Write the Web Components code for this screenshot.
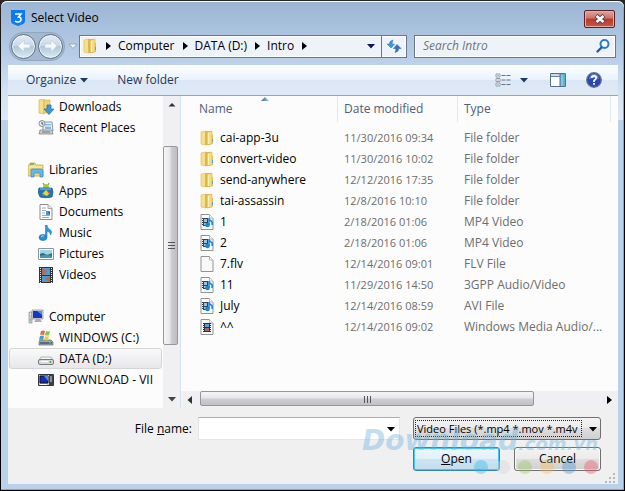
<!DOCTYPE html>
<html lang="en">
<head>
<meta charset="utf-8">
<title>Select Video</title>
<style>
  html, body { margin: 0; }
  body {
    min-height: 100vh; display: flex; background: linear-gradient(#2b2523, #000 90px);
    font: 12px/16px "Open Sans", "Noto Sans", sans-serif; color: #000;
  }
</style>
</head>
<body>
<select-video-dialog></select-video-dialog>
<script>
const ICONS = {
  app: `<path d="M1 0h14v11q0 2-2 3l-5 2-5-2q-2-1-2-3z" fill="#0a7bf0"/><path d="M5 4h6L8.500 7Q11 7 11 9.500T8 12q-2 0-3-1" fill="none" stroke="#fff" stroke-width="1.500"/>`,
  folder: `<path d="M2 2l5-1v14l-5-1z" fill="#f6df8b" stroke="#dcb95a" stroke-width=".6"/><path d="M6 1h5v14H6z" fill="#dfb850"/><path d="M8 2l5-1v13l-5 1z" fill="#f5dc82" stroke="#d2aa45" stroke-width=".6"/><path d="M9.500 3v11" stroke="#fff2b5"/><path d="M13 5h1v9h-1z" fill="#e4bd55"/><path d="M13 9h1v3h-1z" fill="#4aa7e8"/>`,
  downloads: `<path d="M1 1l5-1v15l-5-1z" fill="#f6df8b" stroke="#d5ae49" stroke-width=".6"/><path d="M6 1h6v13H6z" fill="#f1d375" stroke="#d5ae49" stroke-width=".6"/><path d="M9 6h4v4h3l-5 5.500L6 10h3z" fill="#3a97e0" stroke="#1d6cb8" stroke-width=".7"/>`,
  recent: `<path d="M5 2h9l1 9H5z" fill="#e8f3fb" stroke="#8794a1"/><path d="M7 4h6v5H7z" fill="#7fb9e2"/><path d="M7 6h6" stroke="#fff"/><path d="M2 10h12l1 4H1z" fill="#c9ccd0" stroke="#85888c" stroke-width=".8"/><path d="M4 12h8" stroke="#777"/><circle cx="4" cy="3.500" r="3" fill="#e4ebef" stroke="#84919b"/><path d="M4 2v2h1.500" fill="none" stroke="#456"/>`,
  libraries: `<path d="M0 3h2V1h5l1 2h7v11H0z" fill="#f2d980" stroke="#c8a553" stroke-width=".8"/><path d="M2 2h4" stroke="#56b947" stroke-width="1.500"/><path d="M1 5h13" stroke="#fff2b8"/><path d="M3 15V8q0-1 1-1h9q2 0 2 2v6h-3v-3q0-1-1-1H7q-1 0-1 1v3z" fill="#66b8e8" stroke="#3486bd" stroke-width=".7"/>`,
  apps: `<path d="M5 5q0-4 3-4t3 4z" fill="#9ccc38"/><path d="M5 0l1 2M11 0l-1 2" stroke="#65921b"/><path d="M1 5h13l1 4-1 5q-6 1.500-12 0L0 9z" fill="#2674b5" stroke="#16538b" stroke-width=".7"/><path d="M2 6h11" stroke="#7ec2ee"/><path d="M4 11l4-4 4 3-3 3z" fill="#e6d638"/><path d="M5 10l2 2-2 1z" fill="#69b436"/><path d="M9 8l3 1-1 2z" fill="#e24736"/>`,
  documents: `<path d="M2 .5h8l4 4v11H2z" fill="#fff" stroke="#8c8c8c"/><path d="M10 .5v4h4" fill="#e4e4e4" stroke="#aaa"/><path d="M4 4h4M4 6.500h4M4 9h3M4 11.500h8M4 13.500h7" stroke="#9caab8"/><path d="M8 7h4v4H8z" fill="#4f95d5"/><path d="M10 8h2v2z" fill="#1c559c"/>`,
  music: `<ellipse cx="5" cy="12.500" rx="4" ry="3" fill="#278ed8" stroke="#1a6eb3" stroke-width=".6"/><path d="M7.500 12V0h1.500q0 3 3.500 5 2 1.500 0 5 0-3-3.500-4v6z" fill="#2f95dd" stroke="#1f7cc4" stroke-width=".6"/><path d="M3 12q1-1.500 3-1" stroke="#a8dcfb" fill="none"/>`,
  pictures: `<path d="M.5 2.500h15v11H.5z" fill="#fff" stroke="#8d949a"/><path d="M2 4h12v8H2z" fill="#9bd5ef"/><path d="M2 8q3-2 5 0t7-1v5H2z" fill="#32746d"/><path d="M2 10q6-2 12 0v2H2z" fill="#439ba8"/>`,
  videos: `<path d="M1 0h14v16H1z" fill="#303437"/><path d="M4 1h8v7H4zM4 9h8v6H4z" fill="#4f9bd0"/><path d="M4 1l5 3-3 4H4zM12 9l-5 2 3 4h2z" fill="#bc6a53"/><path d="M2.500 1v15M13.500 1v15" stroke="#e4e9ec" stroke-dasharray="1 1"/>`,
  computer: `<path d="M1 3h3v11H1z" fill="#c9ced3" stroke="#8c9196" stroke-width=".7"/><path d="M2 5h1" stroke="#fff"/><path d="M2 11h1" stroke="#45a842"/><path d="M4 1h11v9H4z" fill="#d7dce1" stroke="#858a90" stroke-width=".7"/><path d="M5 2h9v7H5z" fill="#1637c0"/><path d="M9 2h5v4z" fill="#5a8bf0"/><path d="M8 10h4l2 3H6z" fill="#a8adb2"/>`,
  windrive: `<path d="M2 10h11l2 2v3H1v-3z" fill="#9da7ae" stroke="#636c73" stroke-width=".7"/><path d="M2 12h12v2H2z" fill="#4d7188"/><path d="M11 13h2" stroke="#60df65"/><path d="M3 1q2-1 4 0L6 5Q4 4 2 5z" fill="#ed6939"/><path d="M8 1q2 1 4 0l-1 4q-2 1-4 0z" fill="#8cc444"/><path d="M2 6q2-1 4 0L5 10q-2-1-4 0z" fill="#3f9bda"/><path d="M7 6q2 1 4 0l-1 4q-2 1-4 0z" fill="#f6c63b"/>`,
  drive: `<path d="M3 6h10l2 3H1z" fill="#f1f3f4" stroke="#a4a7a9" stroke-width=".8"/><rect x=".5" y="8.500" width="15" height="5" rx="1.500" fill="#d7dadc" stroke="#777b7e"/><path d="M3 10.500h7" stroke="#fff"/><path d="M12.500 10v2" stroke="#3dac35" stroke-width="1.500"/>`,
  device: `<path d="M.5 2.500h15v11H.5z" fill="#c7cacd" stroke="#36393c"/><path d="M2 4h8v7H2z" fill="#112fb8" stroke="#111"/><path d="M6 4h4v5z" fill="#5a86ea"/><path d="M11 3h4v10h-4z" fill="#3b4145"/><path d="M12 5h2M12 7h2M12 9h2" stroke="#d8e4e9"/><path d="M2 12.500h7" stroke="#fff"/>`,
  blank: `<path d="M2 .5h8.500l3.500 3.500v11.500H2z" fill="#f9f9f9" stroke="#929292"/><path d="M10.500 .5V4H14" fill="#fff" stroke="#b5b5b5"/>`,
  media: `<path d="M2 .5h8.500l3.500 3.500v11.500H2z" fill="#fcfcfc" stroke="#929292"/><path d="M10.500 .5V4H14" fill="#fff" stroke="#b5b5b5"/><path d="M3 4h6v8H3z" fill="#35434e"/><path d="M5 5h3v3H5zM5 9h3v2H5z" fill="#9bc4de"/><path d="M3.500 5v7" stroke="#fff" stroke-dasharray="1 1"/><circle cx="8.500" cy="11" r="2.300" fill="#1686dc"/><path d="M10 11V4q0 2 2 3t1 4" fill="none" stroke="#1686dc" stroke-width="1.600"/>`,
  film: `<path d="M2 .5h8.500l3.500 3.500v11.500H2z" fill="#fcfcfc" stroke="#929292"/><path d="M10.500 .5V4H14" fill="#fff" stroke="#b5b5b5"/><path d="M4 4h8v9H4z" fill="#263541"/><path d="M6 5h4v3H6z" fill="#4ea2d5"/><path d="M6 9h4v3H6z" fill="#a2666b"/><path d="M4.500 5v8M11.500 5v8" stroke="#fff" stroke-dasharray="1 1"/>`,
  right: `<path d="M6 4l5 4-5 4z" fill="#000"/>`,
  left: `<path d="M10 4L5.500 8l4.500 4z" fill="#333"/>`,
  up: `<path d="M4.500 9.500L8 6l3.500 3.500z" fill="#333"/>`,
  down: `<path d="M4 6h8L8 10.500z" fill="currentColor"/>`,
  downlight: `<path d="M4 6h8L8 10.500z" fill="#eef5fc" stroke="#8d9cb0" stroke-width=".8"/>`,
  refresh: `<path d="M7 2q-4 1-3.500 4H1l4 4 3.500-4H6q0-2 1-4z" fill="#3b9ade" stroke="#2670b4" stroke-width=".5"/><path d="M9 14.500q4-1 3.500-4H15l-4-4-3.500 4H10q0 2-1 4z" fill="#3674bd" stroke="#205794" stroke-width=".5"/>`,
  search: `<circle cx="9.500" cy="6" r="4" fill="#f3f9ff" stroke="#2d79c9" stroke-width="2"/><path d="M6.500 9.500L2.500 13.500" stroke="#2559a8" stroke-width="2.400" stroke-linecap="round"/>`,
  views: `<path d="M1 2h4v3H1zM1 6.500h4v3H1zM1 11h4v3H1z" fill="#fff" stroke="#7c8ca0" stroke-width=".8"/><path d="M2.500 3.500h1" stroke="#38a"/><path d="M2.500 8h1" stroke="#d22"/><path d="M2.500 12.500h1" stroke="#38a"/><path d="M6.500 3.500h9M6.500 8h9M6.500 12.500h9" stroke="#647287" stroke-dasharray="4 1"/>`,
  preview: `<path d="M.5 1.500h15v13H.5z" fill="#fff" stroke="#54708e"/><path d="M1 2h14v2H1z" fill="#c7d9ea"/><path d="M1 4.500h14" stroke="#6883a0"/><path d="M10 2h5v12h-5z" fill="#5db4d8"/><path d="M12 3v11" stroke="#a8e0f0"/><path d="M10 2v12" stroke="#54708e"/>`,
  help: `<circle cx="8" cy="8" r="7.300" fill="#2448b5" stroke="#6d7482" stroke-width="1.300"/><path d="M3 7q1-5 5-5t5 5q-5-2-10 0z" fill="#6c8de1"/><path d="M5.800 6q0-2.200 2.200-2.200T10.200 6Q10.200 7.200 8 8.500V10" fill="none" stroke="#fff" stroke-width="1.700"/><path d="M8 11v1.800" stroke="#fff" stroke-width="1.800"/>`,
  close: `<path d="M4 4.500l8 7M12 4.500l-8 7" stroke="#574b55" stroke-width="4.400"/><path d="M4.500 5l7 6M11.500 5l-7 6" stroke="#fff" stroke-width="2.400"/>`,
  back: `<path d="M2 8l6-6v4h6v4H8v4z" fill="#f4f9fd" stroke="#c2d2e0" stroke-width=".8"/>`,
  forward: `<path d="M14 8L8 2v4H2v4h6v4z" fill="#f4f9fd" stroke="#c2d2e0" stroke-width=".8"/>`,
  gripv: `<path d="M4 4.500h7M4 7.500h7M4 10.500h7" stroke="#555"/>`,
  griph: `<path d="M5.500 4v7M8.500 4v7M11.500 4v7" stroke="#555"/>`,
  resize: `<path d="M12 5h2v2h-2zM12 9h2v2h-2zM12 13h2v2h-2zM8 9h2v2H8zM8 13h2v2H8zM4 13h2v2H4z" fill="#b8b8b8"/>`
};

function define(name, css, html) {
  const template = document.createElement('template');
  customElements.define(name, class extends HTMLElement {
    constructor() {
      super();
      this.attachShadow({ mode: 'open' });
    }
    connectedCallback() {
      if (this.shadowRoot.childNodes.length) return;
      template.innerHTML = `<style>*{box-sizing:border-box} button,input,select{font:inherit;color:inherit;margin:0} ${css}</style>` + (typeof html === 'function' ? html(this) : html);
      this.shadowRoot.append(template.content.cloneNode(true));
    }
  });
}

define('ui-icon',
  `:host{display:block;flex:none;width:16px;height:16px} svg{display:block}`,
  el => `<svg width="16" height="16" viewBox="0 0 16 16" aria-hidden="true">${ICONS[el.getAttribute('name')]}</svg>`);

define('title-bar',
  `:host{display:flex;align-items:center;gap:5px;height:32px;padding:0 9px}
   h1{flex:1;margin:2px 0 0;font:inherit}
   button{width:31px;height:18px;margin-top:4px;padding:0;display:grid;place-items:center;border:1px solid #5b1f2a;border-radius:2px;
     background:linear-gradient(#dfa49c,#cd7468 45%,#b9392b 50%,#c9564a);box-shadow:inset 0 0 0 1px #e9aaa3}
   ui-icon{margin-top:1px}
   button ui-icon{margin:0}`,
  `<ui-icon name="app"></ui-icon><h1><slot></slot></h1><button aria-label="Close"><ui-icon name="close"></ui-icon></button>`);

define('history-buttons',
  `:host{display:flex;align-items:center;flex:none}
   div{display:flex;gap:2px;padding:1px;border-radius:14px;background:#a4b9d0;border:1px solid #90a7c0}
   button{width:25px;height:25px;padding:0;display:grid;place-items:center;border:1px solid #5d7187;border-radius:50%;
     background:linear-gradient(#e4ecf4,#c8d8e6 48%,#b0c6d8 50%,#dcebf6);box-shadow:inset 0 0 0 1px #edf4fa}
   .menu{width:14px;border:0;background:none;box-shadow:none}`,
  `<div><button aria-label="Back"><ui-icon name="back"></ui-icon></button><button aria-label="Forward"><ui-icon name="forward"></ui-icon></button></div>
   <button class="menu" aria-label="Recent pages"><ui-icon name="downlight"></ui-icon></button>`);

define('address-bar',
  `:host{display:flex;flex:1;height:23px;border:1px solid #68778a;background:#eef3fa;box-shadow:inset 0 0 0 1px #fff}
   nav{flex:1;display:flex;align-items:center;gap:2px;padding-left:2px;white-space:nowrap}
   a{color:inherit;text-decoration:none}
   button{width:20px;padding:0;border:0;background:none;color:#0b1560;display:grid;place-items:center}
   .refresh{width:25px;border-left:1px solid #68778a}`,
  `<nav aria-label="Location"><ui-icon name="folder"></ui-icon><ui-icon name="right"></ui-icon><a href="#computer">Computer</a><ui-icon name="right"></ui-icon><a href="#d">DATA (D:)</a><ui-icon name="right"></ui-icon><a href="#intro">Intro</a><ui-icon name="right"></ui-icon></nav>
   <button aria-label="Previous locations"><ui-icon name="down"></ui-icon></button>
   <button class="refresh" aria-label="Refresh"><ui-icon name="refresh"></ui-icon></button>`);

define('search-box',
  `:host{display:flex;align-items:center;flex:0 1 202px;min-width:0;height:23px;padding-right:4px;border:1px solid #68778a;background:#eef3fa;box-shadow:inset 0 0 0 1px #fff}
   input{flex:1;min-width:0;border:0;padding:0 0 0 8px;background:none;outline:0;font-style:italic}
   input::placeholder{color:#6f7378;opacity:1}
   button{padding:0;border:0;background:none}`,
  `<input type="search" placeholder="Search Intro" aria-label="Search Intro"><button aria-label="Search"><ui-icon name="search"></ui-icon></button>`);

define('tool-bar',
  `:host{display:flex;align-items:center;height:31px;padding:0 16px 0 18px;color:#1e395b;
     background:linear-gradient(#fcfeff,#eaf3fc 48%,#dce7f5 50%,#dfe9f6);border-bottom:1px solid #93a3c0}
   button{display:flex;align-items:center;padding:0;border:0;background:none}
   .organize{margin-right:25px} .spacer{flex:1} .views{gap:5px;margin-right:18px} .preview{margin-right:20px}`,
  `<button class="organize">Organize<ui-icon name="down"></ui-icon></button><button>New folder</button><span class="spacer"></span>
   <button class="views" aria-label="Change your view"><ui-icon name="views"></ui-icon><ui-icon name="down"></ui-icon></button>
   <button class="preview" aria-label="Show the preview pane"><ui-icon name="preview"></ui-icon></button>
   <button aria-label="Help"><ui-icon name="help"></ui-icon></button>`);

define('scroll-bar',
  `:host{display:flex;flex:none;background:#f0f0f2}
   :host([dir-y]){flex-direction:column;width:17px}
   :host(:not([dir-y])){height:17px}
   button{flex:none;display:grid;place-items:center;padding:0;border:0;background:none;width:18px;height:18px;color:#444}
   :host([dir-y]) button{width:17px}
   :host(:not([dir-y])) button{height:17px}
   .track{flex:1;display:flex;flex-direction:inherit}
   .before{flex:var(--before)} .after{flex:var(--after)}
   .thumb{flex:var(--size);display:grid;place-items:center;border:1px solid #96979b;border-radius:2px;background:linear-gradient(#f6f6f7,#e6e6e9 48%,#cfd0d4 52%,#c0c1c7)}
   :host([dir-y]) .thumb{margin:0 2px 0 0;background:linear-gradient(90deg,#f6f6f7,#e6e6e9 48%,#cfd0d4 52%,#bcbdc4)}
   :host(:not([dir-y])) .thumb{margin:0 0 2px}`,
  el => { const y = el.hasAttribute('dir-y'); return `<button aria-label="Scroll back"><ui-icon name="${y ? 'up' : 'left'}"></ui-icon></button>
   <div class="track"><span class="before"></span><span class="thumb"><ui-icon name="${y ? 'gripv' : 'griph'}"></ui-icon></span><span class="after"></span></div>
   <button aria-label="Scroll on"><ui-icon name="${y ? 'down' : 'right'}"></ui-icon></button>`; });

define('nav-item',
  `:host{display:block}
   a{display:flex;align-items:center;gap:5px;height:21px;margin:0 1px;padding-left:28px;border:1px solid transparent;border-radius:3px;color:inherit;text-decoration:none;white-space:nowrap}
   :host([root]) a{padding-left:18px}
   :host([selected]) a{border-color:#d5d5d7;background:linear-gradient(#fafafb,#e7e7e9)}`,
  el => `<a href="#${el.getAttribute('icon')}"><ui-icon name="${el.getAttribute('icon')}"></ui-icon><slot></slot></a>`);

define('nav-tree',
  `:host{display:flex;flex:0 0 173px;min-width:0;background:#fcfcfc;border-right:1px solid #d5e3f5}
   nav{flex:1;min-width:0;overflow:hidden;display:flex;flex-direction:column;gap:21px}`,
  `<nav aria-label="Folders">
    <div><nav-item icon="downloads">Downloads</nav-item><nav-item icon="recent">Recent Places</nav-item></div>
    <div><nav-item root icon="libraries">Libraries</nav-item><nav-item icon="apps">Apps</nav-item><nav-item icon="documents">Documents</nav-item><nav-item icon="music">Music</nav-item><nav-item icon="pictures">Pictures</nav-item><nav-item icon="videos">Videos</nav-item></div>
    <div><nav-item root icon="computer">Computer</nav-item><nav-item icon="windrive">WINDOWS (C:)</nav-item><nav-item selected icon="drive">DATA (D:)</nav-item><nav-item icon="device">DOWNLOAD - VII</nav-item></div>
   </nav><scroll-bar dir-y style="--before:32;--size:199;--after:45"></scroll-bar>`);

const FILES = [
  ['folder', 'cai-app-3u', '11/30/2016 09:34', 'File folder'],
  ['folder', 'convert-video', '11/30/2016 10:02', 'File folder'],
  ['folder', 'send-anywhere', '12/12/2016 17:35', 'File folder'],
  ['folder', 'tai-assassin', '12/8/2016 10:10', 'File folder'],
  ['media', '1', '2/18/2016 01:06', 'MP4 Video'],
  ['media', '2', '2/18/2016 01:06', 'MP4 Video'],
  ['blank', '7.flv', '12/14/2016 09:01', 'FLV File'],
  ['media', '11', '11/29/2016 14:50', '3GPP Audio/Video'],
  ['media', 'July', '12/14/2016 08:59', 'AVI File'],
  ['film', '^^', '12/14/2016 09:02', 'Windows Media Audio/...']
];

define('file-list',
  `:host{display:flex;flex-direction:column;justify-content:space-between;flex:1;min-width:0;background:#fcfcfc}
   table{width:calc(100% - 7px);table-layout:fixed;border-collapse:separate;border-spacing:0}
   th{height:26px;padding:0 6px;text-align:left;font-weight:400;color:#4c607a;border-right:1px solid #dfe9f4}
   th:first-child{width:157px;padding-left:18px}
   th:nth-child(2){width:120px}
   thead{position:relative}
   .sort{position:absolute;top:1px;left:80px;width:8px;height:4px;background:linear-gradient(90deg,#39698c,#9cc9e4);clip-path:polygon(50% 0,100% 100%,0 100%)}
   tbody::before{content:"";display:block;height:5px}
   td{height:21px;padding:0 6px;color:#6d6d6d;white-space:nowrap}
   td:first-child{padding-left:18px;color:#000}
   td:nth-child(2){font-size:11px}
   .name{display:flex;align-items:center;gap:5px}`,
  `<table><thead><tr><th>Name<span class="sort"></span></th><th>Date modified</th><th>Type</th></tr></thead><tbody>
   ${FILES.map(([icon, name, date, type]) => `<tr><td><span class="name"><ui-icon name="${icon}"></ui-icon>${name}</span></td><td>${date}</td><td>${type}</td></tr>`).join('')}
   </tbody></table><scroll-bar style="--before:1;--size:334;--after:66"></scroll-bar>`);

define('site-watermark',
  `:host{position:absolute;right:20px;bottom:10px;display:flex;flex-direction:column;align-items:flex-end;gap:2px;pointer-events:none;opacity:.4}
   p{margin:0;font:italic bold 28px/28px "DejaVu Sans",sans-serif;color:#68b3de;white-space:nowrap}
   small{font-size:18px}
   div{display:flex;gap:8px}
   i{width:14px;height:14px;border-radius:50%}`,
  `<p>Download<small>.com.vn</small></p><div><i style="background:#35b8ef"></i><i style="background:#d5d5d5"></i><i style="background:#9cc964"></i><i style="background:#f9bd63"></i><i style="background:#4d97d3"></i><i style="background:#ed5666"></i></div>`);

define('dialog-footer',
  `:host{position:relative;display:block;background:#f0f0f0;padding:9px 17px 13px}
   form{display:grid;grid-template-columns:1fr 202px 188px;column-gap:13px;row-gap:7px;align-items:center}
   label{justify-self:end;margin-right:-7px}
   .combo{display:flex;height:23px;background:#fff;border:1px solid #e3e5ea;border-top-color:#abadb3}
   .combo input{flex:1;min-width:0;border:0;background:none;outline:0;padding:0 4px}
   .combo button{width:17px;padding:0;border:0;background:none;display:grid;place-items:center}
   .filter{display:grid;align-items:center;height:23px}
   .filter>*{grid-area:1/1}
   select{width:100%;height:23px;appearance:none;padding:0 18px 0 3px;border:1px solid #707070;border-radius:3px;background:linear-gradient(#f3f3f3,#ebebeb 48%,#dedede 50%,#d0d0d0);outline:0;font-size:11px}
   .focus{height:17px;margin:0 19px 0 2px;border:1px dotted #222;pointer-events:none}
   .filter ui-icon{justify-self:end;pointer-events:none}
   .actions{grid-column:3;display:flex;gap:14px}
   .actions button{flex:1;height:24px;padding:0;border:1px solid #707070;border-radius:3px;background:linear-gradient(#f3f3f3,#ebebeb 48%,#dedede 50%,#d0d0d0);box-shadow:inset 0 0 0 1px #fafafa}
   .actions .open{border-color:#3386b4;background:linear-gradient(#eef6fb,#e2f1f9 48%,#cce5f2 50%,#c3dceb);box-shadow:inset 0 0 0 1px #41c8f4}
   .resize{position:absolute;right:1px;bottom:0}`,
  `<form onsubmit="return false"><label for="file">File <u>n</u>ame:</label>
    <div class="combo"><input id="file" type="text"><button type="button" aria-label="Recent file names"><ui-icon name="down"></ui-icon></button></div>
    <div class="filter"><select aria-label="File type"><option>Video Files (*.mp4 *.mov *.m4v</option></select><span class="focus"></span><ui-icon name="down"></ui-icon></div>
    <div class="actions"><button class="open"><u>O</u>pen</button><button type="button">Cancel</button></div></form>
   <site-watermark aria-hidden="true"></site-watermark><ui-icon class="resize" name="resize"></ui-icon>`);

define('select-video-dialog',
  `:host{flex:1;min-width:0;display:flex;flex-direction:column;margin:1px;padding:0 6px 6px 7px;border-radius:6px 6px 0 0;
     background:linear-gradient(#9ab5d3,#b7cde7 54px,#d2e2f3 90px,#dce9f7 119px,#b9d1ea 119px);
     box-shadow:inset 0 1px #fff,inset -1px -1px #35c8ec}
   .address{display:flex;align-items:center;gap:7px;height:32px;padding:0 2px 6px 1px}
   .address history-buttons{margin-right:-7px}
   main{flex:1;display:flex;min-height:0}
   title-bar{margin:0 -6px 0 -7px}`,
  `<title-bar>Select Video</title-bar>
   <div class="address"><history-buttons></history-buttons><address-bar></address-bar><search-box></search-box></div>
   <tool-bar></tool-bar><main><nav-tree></nav-tree><file-list></file-list></main><dialog-footer></dialog-footer>`);
</script>
</body>
</html>
